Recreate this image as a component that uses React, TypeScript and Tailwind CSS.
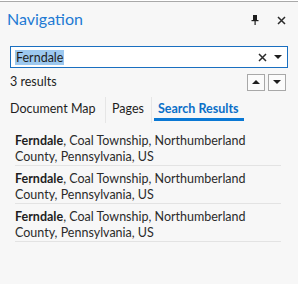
import React from "react";

const RESULTS = [
  { name: "Ferndale", rest: ", Coal Township, Northumberland County, Pennsylvania, US" },
  { name: "Ferndale", rest: ", Coal Township, Northumberland County, Pennsylvania, US" },
  { name: "Ferndale", rest: ", Coal Township, Northumberland County, Pennsylvania, US" },
];

function PinIcon() {
  return (
    <svg width="8" height="10" viewBox="0 0 8 10" className="text-[#1e1e1e]">
      <rect x="2" y="0" width="4" height="5" fill="currentColor" />
      <rect x="0.5" y="5" width="7" height="1.2" fill="currentColor" />
      <rect x="3.5" y="6" width="1.2" height="4" fill="currentColor" />
    </svg>
  );
}

function Cross({ size = 9 }: { size?: number }) {
  return (
    <svg width={size} height={size} viewBox="0 0 9 9">
      <path d="M1 1 L8 8 M8 1 L1 8" stroke="#2b2b2b" strokeWidth="1.5" />
    </svg>
  );
}

function Tri({ up = false }: { up?: boolean }) {
  return (
    <svg width="8" height="4" viewBox="0 0 8 4">
      <path d={up ? "M0 4 L4 0 L8 4 Z" : "M0 0 L8 0 L4 4 Z"} fill="#1e1e1e" />
    </svg>
  );
}

export default function App() {
  return (
    <div className="h-[284px] w-[298px] bg-white pt-px font-['Lato',sans-serif]">
      <div className="h-full border-t border-[#a9a9a9] bg-[#f7f7f7]">
        {/* title bar */}
        <div className="flex h-[34px] items-center pl-[7px] pr-[12px]">
          <span className="text-[16px] leading-none text-[#1e7ad3]">Navigation</span>
          <div className="flex-1" />
          <span className="mr-[18px] mt-[2px] flex"><PinIcon /></span>
          <span className="mt-[2px] flex"><Cross /></span>
        </div>

        {/* search box */}
        <div className="mx-[10px] mt-[10px] flex h-[22px] items-center border border-[#1a6fc0] bg-white pl-[4px] pr-[5px]">
          <span className="bg-[#9cc8ef] px-px text-[12.5px] leading-[15px] text-[#1e1e1e]">Ferndale</span>
          <div className="flex-1" />
          <span className="mr-[7px] flex"><Cross size={9} /></span>
          <Tri />
        </div>

        {/* count + nav */}
        <div className="mt-[5px] flex items-center pl-[10px] pr-[12px]">
          <span className="text-[12.5px] text-[#1e1e1e]">3 results</span>
          <div className="flex-1" />
          <div className="flex gap-[3px]">
            <button className="flex h-[17px] w-[18px] items-center justify-center border border-[#a8a8a8] bg-[#fbfbfb]"><Tri up /></button>
            <button className="flex h-[17px] w-[18px] items-center justify-center border border-[#a8a8a8] bg-[#fbfbfb]"><Tri /></button>
          </div>
        </div>

        {/* tabs */}
        <div className="mt-[5px] flex h-[26px] items-stretch pl-[10px] text-[12.5px] leading-none">
          <span className="flex w-[95px] items-center pb-[5px] pt-[4px] text-[#1e1e1e]">Document Map</span>
          <span className="w-px bg-[#e6e6e6]" />
          <span className="flex w-[45px] items-center pb-[5px] pl-[6px] pt-[4px] text-[#1e1e1e]">Pages</span>
          <span className="w-px bg-[#e6e6e6]" />
          <span className="ml-[2px] flex flex-col">
            <span className="flex flex-1 items-center pl-[4px] pr-[5px] pt-[4px] font-bold text-[#0a6fc8]">Search Results</span>
            <span className="mb-[2px] h-[3px] bg-[#0a78d4]" />
          </span>
        </div>

        {/* results */}
        <div className="ml-[15px] mr-[17px] mt-[5px]">
          {RESULTS.map((r, i) => (
            <div key={i} className="border-b border-[#e3e3e3] pt-[5px] text-[12.5px] leading-[16px] text-[#2b2b2b]">
              <span className="font-bold text-[#1e1e1e]">{r.name}</span>
              {r.rest}
            </div>
          ))}
        </div>
      </div>
    </div>
  );
}
